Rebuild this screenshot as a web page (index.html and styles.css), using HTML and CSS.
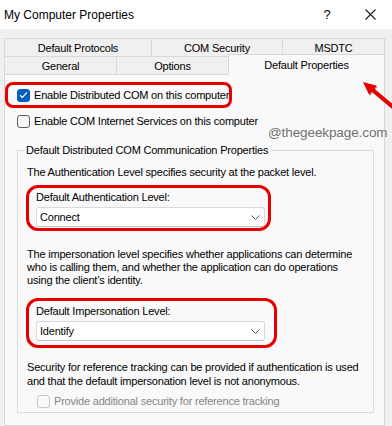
FILE: index.html
```html
<!DOCTYPE html>
<html lang="en">
<head>
<meta charset="utf-8">
<title>My Computer Properties</title>
<link rel="stylesheet" href="styles.css">
</head>
<body>
<div class="window">
  <header class="titlebar">
    <span class="title">My Computer Properties</span>
    <span class="help">?</span>
    <span class="close"><svg width="11" height="11" viewBox="0 0 11 11"><path d="M0.5 0.5 L10.5 10.5 M10.5 0.5 L0.5 10.5" stroke="#1a1a1a" stroke-width="1.1" fill="none"/></svg></span>
  </header>
  <div class="body">
    <div class="tabs">
      <div class="tabrow">
        <div class="tab t-proto">Default Protocols</div>
        <div class="tab t-sec">COM Security</div>
        <div class="tab t-msdtc">MSDTC</div>
      </div>
      <div class="tabrow">
        <div class="tab t-gen">General</div>
        <div class="tab t-opt">Options</div>
        <div class="tab t-def selected">Default Properties</div>
      </div>
    </div>
    <div class="panel">
      <label class="check"><span class="box checked"><svg width="9" height="8" viewBox="0 0 9 8"><polyline points="1,4.2 3.4,6.5 8,1.3" fill="none" stroke="#fff" stroke-width="1.2"/></svg></span>Enable Distributed COM on this computer</label>
      <label class="check second"><span class="box"></span>Enable COM Internet Services on this computer</label>
      <fieldset class="group">
        <legend>Default Distributed COM Communication Properties</legend>
        <p class="auth">The Authentication Level specifies security at the packet level.</p>
        <div class="field-label first">Default Authentication Level:</div>
        <div class="combo"><span>Connect</span><svg width="9" height="5" viewBox="0 0 9 5"><polyline points="0.5,0.5 4.5,4.5 8.5,0.5" fill="none" stroke="#555" stroke-width="1"/></svg></div>
        <p class="imp">The impersonation level specifies whether applications can determine<br>who is calling them, and whether the application can do operations<br>using the client’s identity.</p>
        <div class="field-label second">Default Impersonation Level:</div>
        <div class="combo"><span>Identify</span><svg width="9" height="5" viewBox="0 0 9 5"><polyline points="0.5,0.5 4.5,4.5 8.5,0.5" fill="none" stroke="#555" stroke-width="1"/></svg></div>
        <p class="sec">Security for reference tracking can be provided if authentication is used<br>and that the default impersonation level is not anonymous.</p>
        <label class="check disabled"><span class="box"></span>Provide additional security for reference tracking</label>
      </fieldset>
    </div>
  </div>

  <div class="mark mark-tab"></div>
  <div class="mark mark-dcom"></div>
  <div class="mark mark-auth"></div>
  <div class="mark mark-imp"></div>
  <svg class="arrow" width="37" height="40" viewBox="0 0 37 40">
    <polygon points="9,8 22.8,11.7 20.3,14.8 45,35.3 42.4,38.3 17.7,17.8 15.2,20.9" fill="#5a0000" opacity="0.35"/>
    <polygon points="8,7 21.8,10.7 19.3,13.8 44,34.3 41.4,37.3 16.7,16.8 14.2,19.9" fill="#e60000"/>
  </svg>
  <div class="watermark">@thegeekpage.com</div>
</div>
</body>
</html>
```
FILE: styles.css
```css
* { box-sizing: border-box; }
html, body { margin: 0; padding: 0; }
body {
  width: 392px;
  height: 426px;
  overflow: hidden;
  font-family: "Liberation Sans", Arial, sans-serif;
  font-size: 11px;
  letter-spacing: -0.2px;
  color: #000;
}
.window {
  position: relative;
  width: 392px;
  height: 426px;
  background: #f0f0f0;
  display: flex;
  flex-direction: column;
  overflow: hidden;
}
.titlebar {
  height: 29px;
  flex: none;
  background: #fff;
  display: flex;
  align-items: center;
  padding: 0 12px 0 4px;
  font-size: 12px;
  letter-spacing: 0;
}
.title { flex: 1; }
.help {
  width: 20px;
  margin-right: 23px;
  text-align: center;
  font-size: 13px;
}
.close {
  width: 20px;
  display: flex;
  justify-content: center;
}
.body {
  flex: 1;
  display: flex;
  flex-direction: column;
  padding: 9px 7px 0 4px;
}
.tabrow {
  display: flex;
  height: 18px;
  align-items: flex-start;
}
.tab {
  height: 18px;
  border: 1px solid #d9d9d9;
  border-bottom: none;
  background: #f0f0f0;
  display: flex;
  align-items: center;
  justify-content: center;
  margin-right: -1px;
}
.tab:last-child { margin-right: 0; }
.t-proto { width: 148px; }
.t-sec { width: 132px; }
.t-msdtc { width: 103px; }
.t-gen { width: 113px; }
.t-opt { width: 113px; }
.t-def { width: 157px; }
.tab.selected {
  position: relative;
  z-index: 1;
  height: 21px;
  margin-top: -2px;
  background: #f9f9f9;
}
.panel {
  flex: 1;
  border: 1px solid #d9d9d9;
  background: #f9f9f9;
  padding: 12px 10px 0 12px;
}
.check {
  display: flex;
  align-items: center;
  gap: 4px;
  height: 16px;
}
.check.second { margin-top: 10px; }
.box {
  flex: none;
  width: 13px;
  height: 13px;
  border-radius: 3px;
  border: 1px solid #5f5f5f;
  background: #f6f6f6;
}
.box.checked {
  background: #005fb8;
  border-color: #005fb8;
  display: flex;
  align-items: center;
  justify-content: center;
}
.group {
  margin: 15px 0 0 0;
  border: 1px solid #dcdcdc;
  padding: 0 8px 3px 9px;
  min-width: 0;
}
.group legend {
  padding: 0 2px;
  margin-left: -3px;
  line-height: 13px;
}
.group p { margin: 0; line-height: 13px; }
.group p.auth { margin-top: 9px; }
.field-label {
  line-height: 13px;
  margin-left: 9px;
}
.field-label.first { margin-top: 12px; }
.field-label.second { margin-top: 18px; }
.combo {
  margin: 3px 0 0 9px;
  width: 229px;
  height: 20px;
  background: #fff;
  border: 1px solid #dadada;
  border-bottom-color: #c4c4c4;
  border-radius: 3px;
  display: flex;
  align-items: center;
  justify-content: space-between;
  padding: 0 4px 0 3px;
}
.group p.imp { margin-top: 21px; }
.group p.sec { margin-top: 19px; line-height: 14px; }
.check.disabled {
  margin: 5px 0 0 10px;
  color: #858585;
}
.check.disabled .box {
  border-color: #c6c6c6;
  background: #f9f9f9;
}
.mark {
  position: absolute;
  border: 3px solid #e60000;
}
.mark-tab { left: 228px; top: 54px; width: 140px; height: 21px; border-radius: 6px; }
.mark-dcom { left: 5px; top: 82px; width: 227px; height: 26px; border-radius: 8px; }
.mark-auth { left: 26px; top: 185px; width: 245px; height: 46px; border-radius: 12px; }
.mark-imp { left: 26px; top: 298px; width: 251px; height: 50px; border-radius: 12px; }
.arrow {
  position: absolute;
  left: 355px;
  top: 75px;
}
.watermark {
  position: absolute;
  left: 268px;
  top: 125px;
  font-size: 13.5px;
  line-height: 16px;
  letter-spacing: -0.1px;
  color: #6e6e6e;
  text-shadow: 0 0 2px #fff;
}
```
